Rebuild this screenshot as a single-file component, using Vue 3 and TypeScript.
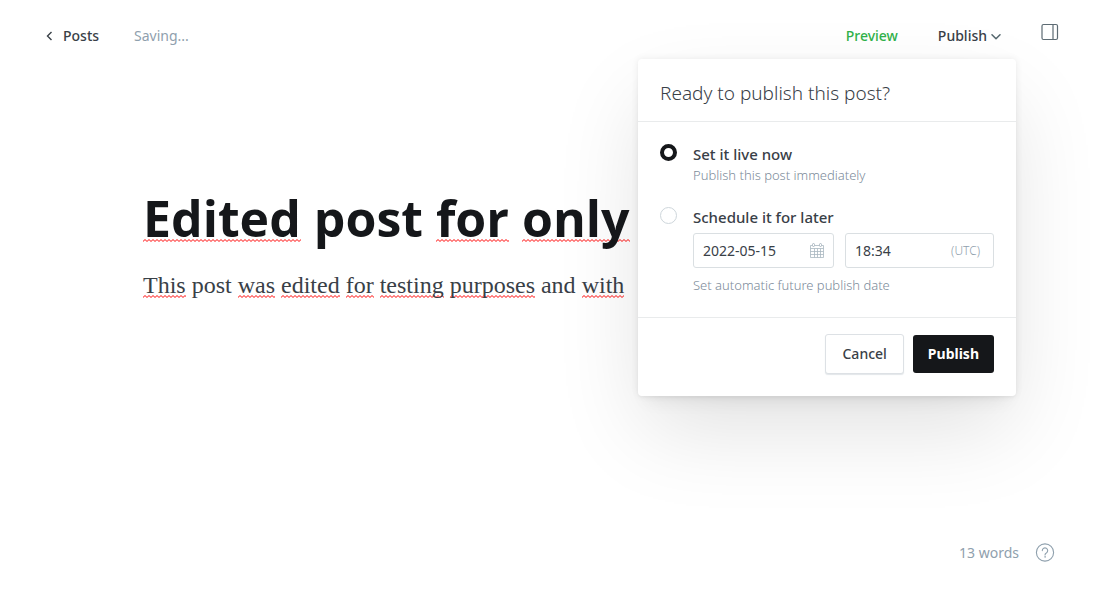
<script setup lang="ts">
import { ref } from 'vue'

interface Word {
  text: string
  flagged: boolean
}

const title: Word[] = [
  { text: 'Edited', flagged: true },
  { text: 'post', flagged: false },
  { text: 'for', flagged: true },
  { text: 'only', flagged: true },
]

const body: Word[] = [
  { text: 'This', flagged: true },
  { text: 'post', flagged: false },
  { text: 'was', flagged: true },
  { text: 'edited', flagged: true },
  { text: 'for', flagged: true },
  { text: 'testing', flagged: true },
  { text: 'purposes', flagged: true },
  { text: 'and', flagged: false },
  { text: 'with', flagged: true },
]

const mode = ref<'now' | 'later'>('now')
const date = ref('2022-05-15')
const time = ref('18:34')
const menuOpen = ref(true)
</script>

<template>
  <div class="page">
    <header class="topbar">
      <a class="back" href="#posts">
        <svg width="7" height="10" viewBox="0 0 7 10" aria-hidden="true">
          <path d="M5.5 1 1.5 5l4 4" fill="none" stroke="currentColor" stroke-width="1.4" />
        </svg>
        <span>Posts</span>
      </a>
      <span class="status">Saving...</span>
      <div class="actions">
        <button class="preview" type="button">Preview</button>
        <div class="menu">
          <button class="trigger" type="button" :aria-expanded="menuOpen" @click="menuOpen = !menuOpen">
            <span>Publish</span>
            <svg width="10" height="7" viewBox="0 0 10 7" aria-hidden="true">
              <path d="M1 1.7 5 5.7l4-4" fill="none" stroke="#54666d" stroke-width="1.5" stroke-linecap="round" stroke-linejoin="round" />
            </svg>
          </button>
          <form v-if="menuOpen" class="panel" @submit.prevent>
            <h2 class="panel-title">Ready to publish this post?</h2>
            <div class="options">
              <div class="option">
                <input id="mode-now" v-model="mode" class="radio" type="radio" name="mode" value="now" />
                <div class="detail">
                  <label class="label" for="mode-now">Set it live now</label>
                  <p class="hint">Publish this post immediately</p>
                </div>
              </div>
              <div class="option">
                <input id="mode-later" v-model="mode" class="radio" type="radio" name="mode" value="later" />
                <div class="detail">
                  <label class="label" for="mode-later">Schedule it for later</label>
                  <div class="fields">
                    <div class="field date">
                      <input v-model="date" type="text" aria-label="Publish date" />
                      <svg width="14" height="15" viewBox="0 0 14 15" fill="none" stroke="#aab7c0" aria-hidden="true">
                        <path d="M.5 2.5h13v12H.5zM.5 5.5h13M.5 8.5h13M.5 11.5h13M4.5 5.5v9M7.5 5.5v9M10.5 5.5v9" stroke-width=".8" />
                        <rect x="2.5" y=".5" width="2" height="3" rx="1" fill="#fff" />
                        <rect x="9.5" y=".5" width="2" height="3" rx="1" fill="#fff" />
                      </svg>
                    </div>
                    <div class="field time">
                      <input v-model="time" type="text" aria-label="Publish time" />
                      <span class="zone">(UTC)</span>
                    </div>
                  </div>
                  <p class="hint">Set automatic future publish date</p>
                </div>
              </div>
            </div>
            <footer class="buttons">
              <button class="cancel" type="button" @click="menuOpen = false">Cancel</button>
              <button class="submit" type="submit">Publish</button>
            </footer>
          </form>
        </div>
        <button class="settings" type="button" aria-label="Settings">
          <svg width="18" height="18" viewBox="0 0 18 18" fill="none" stroke="#5d6b73" stroke-width="1.2" aria-hidden="true">
            <rect x="1" y="1.5" width="15.5" height="15" rx="1.5" />
            <path d="M12 1.5v15" />
          </svg>
        </button>
      </div>
    </header>

    <main class="editor">
      <h1 class="title">
        <template v-for="(word, i) in title" :key="i"><span :class="{ flagged: word.flagged }">{{ word.text }}</span>{{ ' ' }}</template>
      </h1>
      <p class="body">
        <template v-for="(word, i) in body" :key="i"><span :class="{ flagged: word.flagged }">{{ word.text }}</span>{{ ' ' }}</template>
      </p>
    </main>

    <footer class="bottombar">
      <span>13 words</span>
      <a class="help" href="#help" aria-label="Help">
        <svg width="20" height="20" viewBox="0 0 20 20" fill="none" stroke="#8fa0ad" stroke-linecap="round" aria-hidden="true">
          <circle cx="10" cy="9.5" r="8.6" stroke-width="1.1" />
          <path d="M7.3 7.6a2.7 2.7 0 1 1 4.1 2.3c-.9.5-1.4.9-1.4 2" stroke-width="1.1" />
          <circle cx="10" cy="13.9" r=".4" fill="#8fa0ad" stroke-width=".6" />
        </svg>
      </a>
    </footer>
  </div>
</template>

<style>
body {
  margin: 0;
  background: #fff;
}
</style>

<style scoped>
.page {
  display: flex;
  flex-direction: column;
  min-height: 100vh;
  box-sizing: border-box;
  overflow: hidden;
  color: #394047;
  font-family: "Noto Sans", "Open Sans", sans-serif;
  font-size: 14px;
  line-height: 20px;
}

button,
input {
  font: inherit;
  color: inherit;
}

button {
  padding: 0;
  border: 0;
  background: none;
  cursor: pointer;
}

h1,
h2,
p {
  margin: 0;
}

svg {
  display: block;
  flex: none;
}

a {
  color: inherit;
  text-decoration: none;
}

.topbar {
  display: flex;
  align-items: center;
  padding: 26px 41px 0 46px;
}

.back {
  display: flex;
  align-items: center;
  gap: 10px;
  font-weight: 500;
}

.status {
  margin-left: 35px;
  color: #8fa0ad;
}

.actions {
  display: flex;
  align-items: center;
  margin-left: auto;
}

.preview {
  color: #30b24a;
  font-weight: 500;
}

.menu {
  position: relative;
  margin: 0 40px;
}

.trigger {
  display: flex;
  align-items: center;
  gap: 4px;
  font-weight: 500;
}

.settings {
  align-self: flex-start;
  margin-top: -3px;
}

.panel {
  position: absolute;
  z-index: 10;
  top: 33px;
  right: -15px;
  width: 378px;
  border-radius: 4px;
  background: #fff;
  box-shadow:
    0 0 7px rgba(0, 0, 0, 0.08),
    0 2px 2px rgba(0, 0, 0, 0.02),
    0 12px 17px -8px rgba(0, 0, 0, 0.07),
    0 38px 84px -6px rgba(0, 0, 0, 0.12);
}

.panel-title {
  padding: 22px 22px 16px;
  border-bottom: 1px solid #e9ebec;
  font-size: 19px;
  font-weight: 300;
  line-height: 24px;
}

.options {
  display: flex;
  flex-direction: column;
  gap: 21px;
  padding: 22px 22px 21px;
}

.option {
  display: flex;
  gap: 16px;
}

.radio {
  flex: none;
  appearance: none;
  width: 17px;
  height: 17px;
  margin: 0;
  border: 1px solid #ced6db;
  border-radius: 50%;
  background: #fff;
}

.radio:checked {
  border: 4px solid #15171a;
}

.detail {
  flex: 1;
  min-width: 0;
}

.label {
  display: block;
  font-size: 15px;
  font-weight: 500;
}

.hint {
  color: #7c8b9a;
  font-size: 13px;
  font-weight: 300;
  line-height: 22px;
}

.fields {
  display: flex;
  gap: 11px;
  margin: 6px 0;
}

.field {
  display: flex;
  align-items: center;
  box-sizing: border-box;
  height: 35px;
  padding: 0 9px;
  border: 1px solid #dadfe2;
  border-radius: 3px;
}

.field input {
  flex: 1;
  width: 0;
  min-width: 0;
  padding: 0;
  border: 0;
  outline: 0;
  background: none;
}

.date {
  flex: 121;
}

.time {
  flex: 129;
}

.zone {
  padding-right: 4px;
  color: #8fa0ad;
  font-size: 12px;
  font-weight: 300;
}

.buttons {
  display: flex;
  align-items: center;
  justify-content: flex-end;
  gap: 9px;
  padding: 16px 22px 22px;
  border-top: 1px solid #e9ebec;
}

.cancel {
  padding: 9px 16px;
  border: 1px solid #dde1e5;
  border-radius: 3px;
  background: #fff;
  box-shadow: 0 1px 1px rgba(60, 90, 110, 0.15);
  font-weight: 500;
}

.submit {
  padding: 9px 15px;
  border-radius: 3px;
  background: #15171a;
  color: #fff;
  font-weight: 700;
}

.editor {
  flex: 1;
  padding: 140px 143px 0;
}

.title {
  color: #15171a;
  font-family: "Open Sans", "Noto Sans", sans-serif;
  font-size: 50px;
  font-weight: 700;
  line-height: 64px;
}

.body {
  margin-top: 19px;
  font-family: "Liberation Serif", serif;
  font-size: 24px;
  line-height: 32px;
}

.flagged {
  background: url("data:image/svg+xml,%3Csvg xmlns='http://www.w3.org/2000/svg' width='4' height='3'%3E%3Cpath d='M-1 1.5 0 2.5 2 .5 4 2.5 5 1.5' fill='none' stroke='%23f00'/%3E%3C/svg%3E") repeat-x 0 100%;
}

.title .flagged {
  background-position: 0 55px;
}

.bottombar {
  display: flex;
  align-items: center;
  justify-content: flex-end;
  gap: 16px;
  padding: 0 45px 41px;
  color: #8fa0ad;
}
</style>
